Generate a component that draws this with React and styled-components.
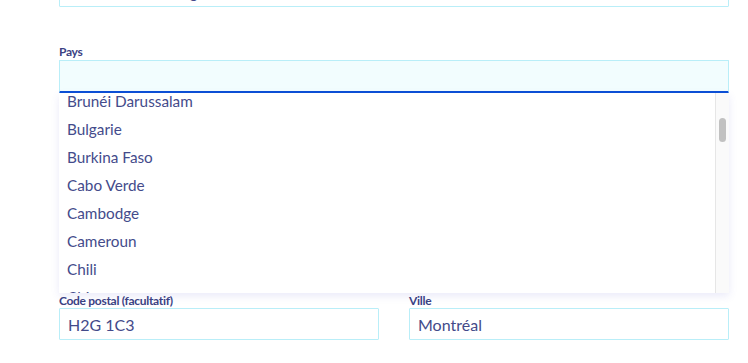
import React, { useEffect, useRef } from 'react';
import styled, { createGlobalStyle } from 'styled-components';

const GlobalStyle = createGlobalStyle`
  html, body {
    margin: 0;
    background: #ffffff;
    font-family: 'Lato', 'Open Sans', sans-serif;
    overflow: hidden;
  }
`;

const ROW_H = 28;
const LIST_H = 200;

const Form = styled.form`
  width: 670px;
  margin: -41px 0 0 59px;
  display: flex;
  flex-direction: column;
`;

const Field = styled.div`
  display: flex;
  flex-direction: column;
  margin-top: ${(p) => p.$gap || 0}px;
`;

const Label = styled.label`
  font-size: 12px;
  font-weight: 700;
  line-height: ${(p) => p.$lh || 16}px;
  letter-spacing: -0.3px;
  color: #3b4283;
`;

const Input = styled.input`
  box-sizing: border-box;
  height: 32px;
  width: 100%;
  margin: 0;
  padding: 0 8px;
  border: 1px solid #b9eef8;
  border-radius: 1px;
  background: ${(p) => (p.$active ? '#f2fdfe' : '#ffffff')};
  font-family: inherit;
  font-size: 16px;
  color: #434a8a;
  outline: none;
  ${(p) => p.$active && 'height: 33px; border-bottom: 2px solid #0b4fd6;'}
`;

const Listbox = styled.div`
  display: flex;
  height: ${LIST_H}px;
  background: #ffffff;
  box-shadow: 0 3px 8px rgba(90, 90, 210, 0.13);
  position: relative;
  z-index: 1;
`;

const Viewport = styled.ul`
  flex: 1;
  margin: 0;
  padding: 0;
  list-style: none;
  overflow: hidden;
`;

const Track = styled.div`
  width: 13px;
  flex: none;
  background: #fafafa;
  border-left: 1px solid #e6e6e6;
`;

const Thumb = styled.div`
  width: 7px;
  margin-left: 3px;
  border-radius: 4px;
  background: #c1c1c1;
`;

const Option = styled.li`
  height: ${ROW_H}px;
  line-height: ${ROW_H}px;
  padding: 0 8px;
  font-size: 15.3px;
  color: #444b8b;
  white-space: nowrap;
`;

const Row = styled.div`
  display: grid;
  grid-template-columns: 1fr 1fr;
  column-gap: 30px;
`;

const countries = [
  'Bénin', 'Bhoutan', 'Biélorussie', 'Bolivie', 'Bosnie-Herzégovine', 'Botswana', 'Brésil',
  'Brunéi Darussalam', 'Bulgarie', 'Burkina Faso', 'Cabo Verde', 'Cambodge', 'Cameroun', 'Chili',
  'Chine', 'Chypre', 'Colombie', 'Comores', 'Congo', 'Corée du Nord', 'Corée du Sud', 'Costa Rica',
  "Côte d'Ivoire", 'Croatie', 'Cuba', 'Danemark', 'Djibouti', 'Dominique', 'Égypte',
  'Émirats arabes unis', 'Équateur', 'Érythrée', 'Espagne', 'Estonie', 'Eswatini', 'États-Unis',
  'Éthiopie', 'Fidji', 'Finlande', 'France', 'Gabon', 'Gambie', 'Géorgie', 'Ghana', 'Grèce',
  'Grenade', 'Guatemala', 'Guinée', 'Guyana', 'Haïti', 'Honduras', 'Hongrie', 'Inde', 'Indonésie',
  'Irak', 'Iran', 'Irlande', 'Islande', 'Israël',
];

const SCROLL_TOP = 7 * ROW_H + 6;
const contentH = countries.length * ROW_H;
const thumbH = Math.round((LIST_H * LIST_H) / contentH);
const thumbTop = Math.round((SCROLL_TOP / contentH) * LIST_H) + 1;

export default function App() {
  const listRef = useRef(null);

  useEffect(() => {
    if (listRef.current) listRef.current.scrollTop = SCROLL_TOP;
  }, []);

  return (
    <>
      <GlobalStyle />
      <Form onSubmit={(e) => e.preventDefault()}>
        <Field>
          <Label>Adresse</Label>
          <Input defaultValue="5333 avenue Casgrain" />
        </Field>

        <Field $gap={37}>
          <Label>Pays</Label>
          <Input $active />
          <Listbox>
            <Viewport ref={listRef} role="listbox">
              {countries.map((c) => (
                <Option key={c} role="option">{c}</Option>
              ))}
            </Viewport>
            <Track>
              <Thumb style={{ height: thumbH, marginTop: thumbTop }} />
            </Track>
          </Listbox>
        </Field>

        <Row>
          <Field>
            <Label $lh={15}>Code postal (facultatif)</Label>
            <Input defaultValue="H2G 1C3" />
          </Field>
          <Field>
            <Label $lh={15}>Ville</Label>
            <Input defaultValue="Montréal" />
          </Field>
        </Row>
      </Form>
    </>
  );
}
